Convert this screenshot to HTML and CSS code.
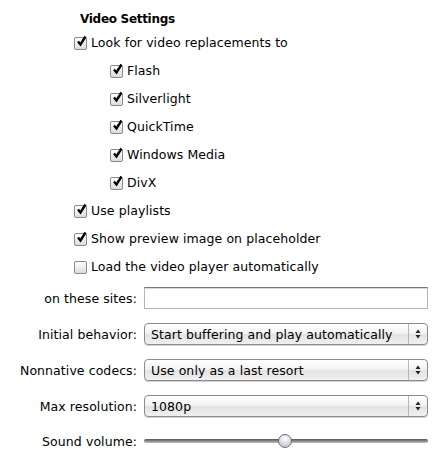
FILE: index.html
```html
<!DOCTYPE html>
<html lang="en">
<head>
    <meta charset="UTF-8">
    <title>Video Settings</title>
    <link rel="stylesheet" href="styles.css">
</head>
<body>

<div class="prefs">
    <div class="section-title">Video Settings</div>

    <div class="check-list">
        <label class="check"><span class="box on"></span>Look for video replacements to</label>
        <div class="sub-list">
            <label class="check"><span class="box on"></span>Flash</label>
            <label class="check"><span class="box on"></span>Silverlight</label>
            <label class="check"><span class="box on"></span>QuickTime</label>
            <label class="check"><span class="box on"></span>Windows Media</label>
            <label class="check"><span class="box on"></span>DivX</label>
        </div>
        <label class="check"><span class="box on"></span>Use playlists</label>
        <label class="check"><span class="box on"></span>Show preview image on placeholder</label>
        <label class="check"><span class="box"></span>Load the video player automatically</label>
    </div>

    <div class="form-grid">
        <div class="label">on these sites:</div>
        <div class="text-field"></div>

        <div class="label">Initial behavior:</div>
        <div class="popup"><span class="popup-text">Start buffering and play automatically</span><span class="arrows"></span></div>

        <div class="label">Nonnative codecs:</div>
        <div class="popup"><span class="popup-text">Use only as a last resort</span><span class="arrows"></span></div>

        <div class="label">Max resolution:</div>
        <div class="popup"><span class="popup-text">1080p</span><span class="arrows"></span></div>

        <div class="label">Sound volume:</div>
        <div class="slider"><span class="knob"></span></div>
    </div>
</div>

</body>
</html>
```

FILE: styles.css
```css
/* General styling */
body {
    margin: 0;
    background: #ffffff;
    color: #000000;
    font-family: "DejaVu Sans", "Lucida Grande", sans-serif;
    font-size: 12.5px;
    letter-spacing: 0.08px;
}

.prefs {
    padding-top: 11px;
}

/* Section header */
.section-title {
    font-weight: bold;
    font-size: 12px;
    margin-left: 80px;
    height: 16px;
    line-height: 16px;
    letter-spacing: -0.3px;
}

/* Checkbox list */
.check-list {
    margin-left: 74px;
    margin-top: 8px;
    display: flex;
    flex-direction: column;
    gap: 12px;
}

.sub-list {
    margin-left: 36px;
    display: flex;
    flex-direction: column;
    gap: 12px;
}

.check {
    display: flex;
    align-items: center;
    height: 16px;
    line-height: 16px;
}

.box {
    width: 11px;
    height: 11px;
    margin-right: 4px;
    border: 1px solid #8a8a8a;
    border-radius: 2px;
    background: linear-gradient(#ffffff, #dcdcdc);
    position: relative;
    flex: none;
}

.box.on::after {
    content: "";
    position: absolute;
    left: 1px;
    top: -3px;
    width: 11px;
    height: 12px;
    background: url("data:image/svg+xml,%3Csvg xmlns='http://www.w3.org/2000/svg' viewBox='0 0 11 12'%3E%3Cpath d='M2 6.5 L4.5 9.5 L9.5 1.5' fill='none' stroke='%23000' stroke-width='2.4'/%3E%3C/svg%3E") no-repeat;
}

/* Labelled controls */
.form-grid {
    margin-top: 12px;
    display: grid;
    grid-template-columns: 137px 284px;
    column-gap: 7px;
    row-gap: 14px;
    align-items: center;
}

.label {
    text-align: right;
}

.text-field {
    height: 20px;
    border: 1px solid #b5b5b5;
    border-top-color: #777777;
    box-shadow: inset 0 1px 0 #d8d8d8;
}

.popup {
    height: 20px;
    border: 1px solid #8c8c8c;
    border-radius: 4px;
    background: linear-gradient(#ffffff, #f1f1f1 50%, #e2e2e2 51%, #f0f0f0);
    display: flex;
    align-items: center;
    box-shadow: 0 1px 0 #d0d0d0;
}

.popup-text {
    flex: 1;
    padding-left: 6px;
}

.arrows {
    width: 18px;
    height: 100%;
    border-left: 1px solid #b8b8b8;
    background: url("data:image/svg+xml,%3Csvg xmlns='http://www.w3.org/2000/svg' viewBox='0 0 18 20'%3E%3Cpath d='M9 5.5 L11.5 9 L6.5 9 Z M6.5 11 L11.5 11 L9 14.5 Z' fill='%23222'/%3E%3C/svg%3E") no-repeat;
}

/* Volume slider */
.slider {
    height: 20px;
    position: relative;
}

.slider::before {
    content: "";
    position: absolute;
    left: 0;
    right: 0;
    top: 8px;
    height: 4px;
    border-radius: 2px;
    background: linear-gradient(#555555, #888888 50%, #c0c0c0);
}

.knob {
    position: absolute;
    left: 134px;
    top: 3px;
    width: 12px;
    height: 12px;
    border-radius: 50%;
    border: 1px solid #6c6c6c;
    background: radial-gradient(circle at 50% 30%, #ffffff, #c9cfd8 70%);
}
```
